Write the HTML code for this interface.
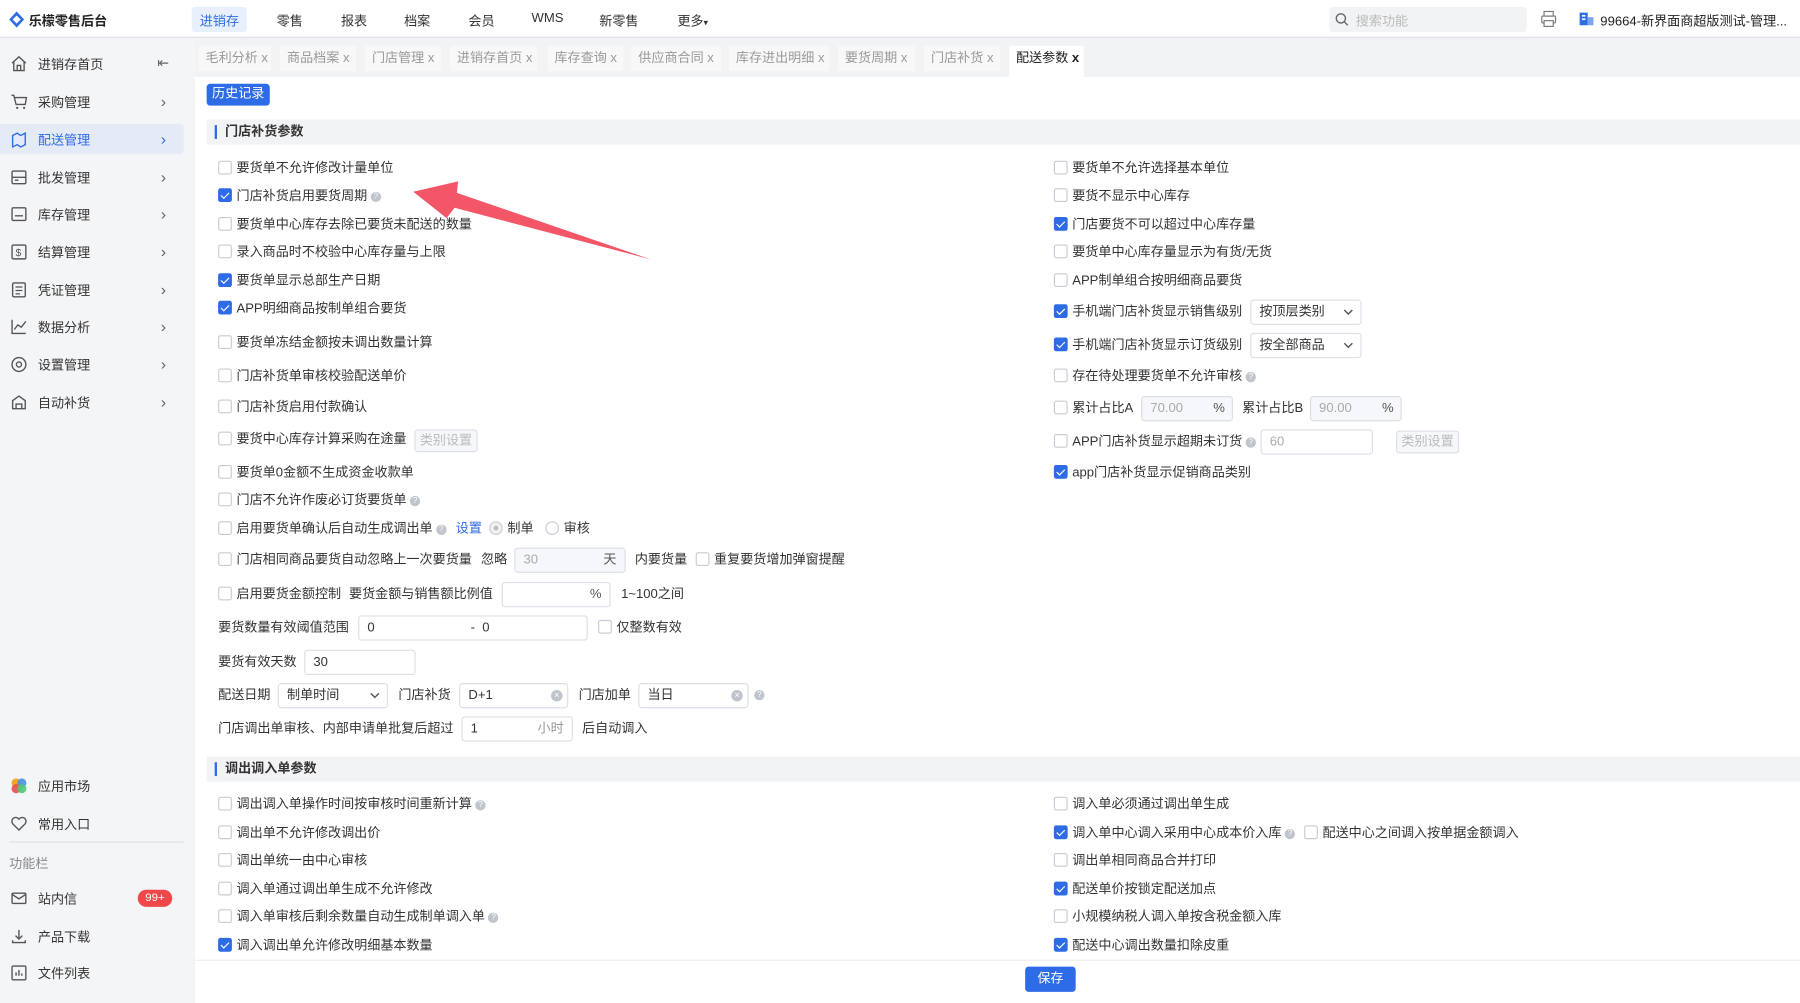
<!DOCTYPE html>
<html><head><meta charset="utf-8">
<style>
*{margin:0;padding:0;box-sizing:border-box}
html,body{width:1800px;height:1003px;overflow:hidden;background:#fff}
#w{position:absolute;left:0;top:0;width:1568px;height:874px;transform:scale(1.148);transform-origin:0 0;font-family:"Liberation Sans","Noto Sans CJK SC",sans-serif;font-size:11.4px;color:#333}
.a{position:absolute;white-space:nowrap}
.top{left:0;top:0;width:1568px;height:33px;background:#fff;border-bottom:1px solid #dcdfe6}
.side{left:0;top:33px;width:170px;height:841px;background:#f4f5f7}
.tabs{left:170px;top:33px;width:1398px;height:34px;background:#f2f3f5}
.tab{position:absolute;top:7px;height:22px;line-height:22px;background:#f8f8f9;color:#999;padding-left:6px;font-size:11.4px}
.tab.on{background:#fff;color:#222}
.sec{left:180px;width:1388px;height:22px;background:#f2f3f5;font-weight:bold;font-size:11.4px;line-height:22px;padding-left:16px}
.sec:before{content:"";position:absolute;left:7px;top:5px;width:2px;height:12px;background:#2e6be6}
.r{position:absolute;white-space:nowrap;height:14px;line-height:14px;font-size:11.4px;color:#333}
.cb{display:inline-block;width:12px;height:12px;border:1px solid #c8ccd4;border-radius:2px;vertical-align:-2px;margin-right:4px;background:#fff;position:relative}
.cb.c{background:#2e6be6;border-color:#2e6be6}
.cb.c:after{content:"";position:absolute;left:3px;top:1px;width:3px;height:6px;border:solid #fff;border-width:0 1.5px 1.5px 0;transform:rotate(45deg)}
.q{display:inline-block;width:9px;height:9px;border-radius:50%;background:#c0c4cc;color:#fff;font-size:7px;line-height:9px;text-align:center;margin-left:3px;vertical-align:1px}
.in{position:absolute;height:22px;border:1px solid #dcdfe6;border-radius:3px;background:#fff;line-height:20px;padding-left:7px;font-size:11.4px;color:#333}
.in.d{background:#f5f7fa;color:#aaa}
.btn{position:absolute;height:20px;border:1px solid #dcdfe6;border-radius:3px;background:#f5f7fa;color:#bbb;line-height:18px;text-align:center;font-size:11.4px}
.si{position:absolute;left:9px;width:15px;height:15px}
.st{position:absolute;left:33px;font-size:11.4px;color:#333}
.ar{position:absolute;left:140px;color:#666;font-size:14px;line-height:14px}
</style></head><body><div id="w">
<div class="a top">
  <svg class="a" style="left:8px;top:10px" width="13" height="14" viewBox="0 0 13 14"><path d="M6.5 0L13 7 6.5 14 0 7z" fill="#2e6be6"/><path d="M6.5 3.5L10 7 6.5 10.5 3 7z" fill="#fff"/></svg>
  <div class="a" style="left:25px;top:10px;font-weight:bold;color:#222">乐檬零售后台</div>
  <div class="a" style="left:167px;top:6px;width:48px;height:22px;background:#e8effd;border-radius:3px"></div>
  <div class="a" style="left:174px;top:10px;color:#2e6be6">进销存</div>
  <div class="a" style="left:241px;top:10px">零售</div>
  <div class="a" style="left:297px;top:10px">报表</div>
  <div class="a" style="left:352px;top:10px">档案</div>
  <div class="a" style="left:408px;top:10px">会员</div>
  <div class="a" style="left:463px;top:10px">WMS</div>
  <div class="a" style="left:522px;top:10px">新零售</div>
  <div class="a" style="left:590px;top:10px">更多<span style="font-size:8px">▾</span></div>
  <div class="a" style="left:1158px;top:6px;width:172px;height:22px;background:#f2f3f5;border-radius:3px"></div>
  <svg class="a" style="left:1163px;top:11px" width="12" height="12" viewBox="0 0 12 12"><circle cx="5" cy="5" r="4" fill="none" stroke="#666" stroke-width="1.2"/><path d="M8 8l3 3" stroke="#666" stroke-width="1.2"/></svg>
  <div class="a" style="left:1181px;top:10px;color:#bbb">搜索功能</div>
  <svg class="a" style="left:1342px;top:9px" width="14" height="15" viewBox="0 0 14 15"><rect x="3" y="1" width="8" height="4" fill="none" stroke="#777"/><rect x="1" y="5" width="12" height="6" rx="1" fill="none" stroke="#777"/><rect x="3" y="9" width="8" height="5" fill="#fff" stroke="#777"/></svg>
  <svg class="a" style="left:1375px;top:10px" width="14" height="13" viewBox="0 0 14 13"><rect x="1" y="1" width="7" height="11" fill="#2e6be6"/><rect x="8" y="5" width="5" height="7" fill="#7aa3f0"/><rect x="3" y="3" width="3" height="1.5" fill="#fff"/><rect x="3" y="6" width="3" height="1.5" fill="#fff"/></svg>
  <div class="a" style="left:1394px;top:10px;color:#222">99664-新界面商超版测试-管理...</div>
</div>

<div class="a side">
  <div class="a" style="left:0;top:75px;width:160px;height:26px;background:#e4eaf6;border-radius:0 3px 3px 0"></div>
</div>
<div class="a" style="left:0;top:0">
<svg class="si" style="top:48px" viewBox="0 0 15 15"><path d="M1.5 7L7.5 1.5 13.5 7M3 6v7.5h9V6M6 13.5V9h3v4.5" fill="none" stroke="#555" stroke-width="1.2"/></svg><div class="st" style="top:48px">进销存首页</div><div class="ar" style="top:48px;left:137px;font-size:12px">⇤</div>
<svg class="si" style="top:81px" viewBox="0 0 15 15"><path d="M1 2h2l2 8h8l1-6H4" fill="none" stroke="#555" stroke-width="1.2"/><circle cx="6" cy="13" r="1" fill="#555"/><circle cx="12" cy="13" r="1" fill="#555"/></svg><div class="st" style="top:81px">采购管理</div><div class="ar" style="top:81px">›</div>
<svg class="si" style="top:114px" viewBox="0 0 15 15"><path d="M2 4l4-2 3 2 4-2v10l-4 2-3-2-4 2z" fill="none" stroke="#2e6be6" stroke-width="1.2"/></svg><div class="st" style="top:114px;color:#2e6be6">配送管理</div><div class="ar" style="top:114px;color:#2e6be6">›</div>
<svg class="si" style="top:147px" viewBox="0 0 15 15"><rect x="1.5" y="2" width="12" height="11" rx="1" fill="none" stroke="#555" stroke-width="1.2"/><path d="M1.5 7.5h12M4 10h3" stroke="#555" stroke-width="1.2"/></svg><div class="st" style="top:147px">批发管理</div><div class="ar" style="top:147px">›</div>
<svg class="si" style="top:179px" viewBox="0 0 15 15"><rect x="1.5" y="2" width="12" height="11" rx="1" fill="none" stroke="#555" stroke-width="1.2"/><path d="M4 9h7" stroke="#555" stroke-width="1.2"/></svg><div class="st" style="top:179px">库存管理</div><div class="ar" style="top:179px">›</div>
<svg class="si" style="top:212px" viewBox="0 0 15 15"><rect x="1.5" y="1.5" width="12" height="12" rx="1" fill="none" stroke="#555" stroke-width="1.2"/><text x="4.5" y="11" font-size="9" fill="#555" font-family="Liberation Sans">$</text></svg><div class="st" style="top:212px">结算管理</div><div class="ar" style="top:212px">›</div>
<svg class="si" style="top:245px" viewBox="0 0 15 15"><rect x="2" y="1.5" width="11" height="12" rx="1" fill="none" stroke="#555" stroke-width="1.2"/><path d="M4.5 5h6M4.5 8h6M4.5 11h4" stroke="#555" stroke-width="1.1"/></svg><div class="st" style="top:245px">凭证管理</div><div class="ar" style="top:245px">›</div>
<svg class="si" style="top:277px" viewBox="0 0 15 15"><path d="M1.5 1.5v12h12M3.5 10l3-4 3 2 4-5" fill="none" stroke="#555" stroke-width="1.2"/></svg><div class="st" style="top:277px">数据分析</div><div class="ar" style="top:277px">›</div>
<svg class="si" style="top:310px" viewBox="0 0 15 15"><circle cx="7.5" cy="7.5" r="6" fill="none" stroke="#555" stroke-width="1.2"/><circle cx="7.5" cy="7.5" r="2.2" fill="none" stroke="#555" stroke-width="1.2"/></svg><div class="st" style="top:310px">设置管理</div><div class="ar" style="top:310px">›</div>
<svg class="si" style="top:343px" viewBox="0 0 15 15"><path d="M2 13V6l5.5-4L13 6v7zM5 13V9h5v4" fill="none" stroke="#555" stroke-width="1.2"/></svg><div class="st" style="top:343px">自动补货</div><div class="ar" style="top:343px">›</div>
<svg class="si" style="top:677px" viewBox="0 0 15 15"><circle cx="5" cy="5" r="4" fill="#f5a623"/><circle cx="10" cy="5" r="4" fill="#4a90e2" opacity=".9"/><circle cx="5" cy="10" r="4" fill="#e94e4e" opacity=".9"/><circle cx="10" cy="10" r="4" fill="#50c878" opacity=".9"/></svg><div class="st" style="top:677px">应用市场</div>
<svg class="si" style="top:710px" viewBox="0 0 15 15"><path d="M7.5 13L2 7.5A3 3 0 017.5 3.5 3 3 0 0113 7.5z" fill="none" stroke="#555" stroke-width="1.2"/></svg><div class="st" style="top:710px">常用入口</div>
<div class="a" style="left:8px;top:733px;width:152px;height:1px;background:#dcdfe6"></div>
<div class="a" style="left:8px;top:744px;color:#888">功能栏</div>
<svg class="si" style="top:775px" viewBox="0 0 15 15"><rect x="1.5" y="3" width="12" height="9" rx="1" fill="none" stroke="#555" stroke-width="1.2"/><path d="M1.5 4l6 4 6-4" fill="none" stroke="#555" stroke-width="1.2"/></svg><div class="st" style="top:775px">站内信</div>
<div class="a" style="left:120px;top:775px;width:30px;height:15px;border-radius:8px;background:#f04848;color:#fff;font-size:10px;line-height:15px;text-align:center">99+</div>
<svg class="si" style="top:808px" viewBox="0 0 15 15"><path d="M7.5 2v8M4.5 7l3 3 3-3M2 11v2h11v-2" fill="none" stroke="#555" stroke-width="1.2"/></svg><div class="st" style="top:808px">产品下载</div>
<svg class="si" style="top:840px" viewBox="0 0 15 15"><rect x="1.5" y="1.5" width="12" height="12" rx="1" fill="none" stroke="#555" stroke-width="1.2"/><path d="M5 10V7M7.5 10V5M10 10V8" stroke="#555" stroke-width="1.2"/></svg><div class="st" style="top:840px">文件列表</div>
</div>

<div class="a tabs">
<div class="tab" style="left:3px;width:63px">毛利分析 x</div>
<div class="tab" style="left:74px;width:66px">商品档案 x</div>
<div class="tab" style="left:148px;width:66px">门店管理 x</div>
<div class="tab" style="left:222px;width:76px">进销存首页 x</div>
<div class="tab" style="left:307px;width:66px">库存查询 x</div>
<div class="tab" style="left:380px;width:78px">供应商合同 x</div>
<div class="tab" style="left:465px;width:87px">库存进出明细 x</div>
<div class="tab" style="left:560px;width:67px">要货周期 x</div>
<div class="tab" style="left:635px;width:66px">门店补货 x</div>
<div class="tab on" style="left:709px;width:65px;height:27px">配送参数 <b>x</b></div>
</div>

<div class="a" style="left:180px;top:73px;width:55px;height:19px;background:#2e6be6;border-radius:3px;color:#fff;line-height:19px;text-align:center">历史记录</div>
<div class="a sec" style="top:104px">门店补货参数</div>

<div class="r" style="left:190px;top:140px"><i class="cb"></i>要货单不允许修改计量单位</div>
<div class="r" style="left:190px;top:164px"><i class="cb c"></i>门店补货启用要货周期<span class="q">?</span></div>
<div class="r" style="left:190px;top:189px"><i class="cb"></i>要货单中心库存去除已要货未配送的数量</div>
<div class="r" style="left:190px;top:213px"><i class="cb"></i>录入商品时不校验中心库存量与上限</div>
<div class="r" style="left:190px;top:238px"><i class="cb c"></i>要货单显示总部生产日期</div>
<div class="r" style="left:190px;top:262px"><i class="cb c"></i>APP明细商品按制单组合要货</div>
<div class="r" style="left:190px;top:292px"><i class="cb"></i>要货单冻结金额按未调出数量计算</div>
<div class="r" style="left:190px;top:321px"><i class="cb"></i>门店补货单审核校验配送单价</div>
<div class="r" style="left:190px;top:348px"><i class="cb"></i>门店补货启用付款确认</div>
<div class="r" style="left:190px;top:376px"><i class="cb"></i>要货中心库存计算采购在途量</div>
<div class="btn" style="left:361px;top:374px;width:55px">类别设置</div>
<div class="r" style="left:190px;top:405px"><i class="cb"></i>要货单0金额不生成资金收款单</div>
<div class="r" style="left:190px;top:429px"><i class="cb"></i>门店不允许作废必订货要货单<span class="q">?</span></div>
<div class="r" style="left:190px;top:454px"><i class="cb"></i>启用要货单确认后自动生成调出单<span class="q">?</span></div>
<div class="r" style="left:397px;top:454px;color:#2e6be6">设置</div>
<div class="r" style="left:426px;top:454px"><i class="cb" style="border-radius:50%;background:#f0f0f0"><i style="position:absolute;left:3px;top:3px;width:4px;height:4px;border-radius:50%;background:#bbb"></i></i>制单</div>
<div class="r" style="left:475px;top:454px"><i class="cb" style="border-radius:50%"></i>审核</div>
<div class="r" style="left:190px;top:481px"><i class="cb"></i>门店相同商品要货自动忽略上一次要货量</div>
<div class="r" style="left:419px;top:481px">忽略</div>
<div class="in d" style="left:448px;top:477px;width:97px">30<span style="position:absolute;right:7px;color:#555">天</span></div>
<div class="r" style="left:553px;top:481px">内要货量</div>
<div class="r" style="left:606px;top:481px"><i class="cb"></i>重复要货增加弹窗提醒</div>
<div class="r" style="left:190px;top:511px"><i class="cb"></i>启用要货金额控制</div>
<div class="r" style="left:304px;top:511px">要货金额与销售额比例值</div>
<div class="in" style="left:437px;top:507px;width:95px"><span style="position:absolute;right:7px;color:#555">%</span></div>
<div class="r" style="left:541px;top:511px">1~100之间</div>
<div class="r" style="left:190px;top:540px">要货数量有效阈值范围</div>
<div class="in" style="left:312px;top:536px;width:200px">0<span style="position:absolute;left:97px">- &nbsp;0</span></div>
<div class="r" style="left:521px;top:540px"><i class="cb"></i>仅整数有效</div>
<div class="r" style="left:190px;top:570px">要货有效天数</div>
<div class="in" style="left:265px;top:566px;width:97px">30</div>
<div class="r" style="left:190px;top:599px">配送日期</div>
<div class="in" style="left:242px;top:595px;width:96px">制单时间<svg style="position:absolute;right:6px;top:7px" width="9" height="6" viewBox="0 0 9 6"><path d="M1 1l3.5 3.5L8 1" fill="none" stroke="#555" stroke-width="1.2"/></svg></div>
<div class="r" style="left:347px;top:599px">门店补货</div>
<div class="in" style="left:400px;top:595px;width:95px">D+1<span style="position:absolute;right:4px;top:5px;width:10px;height:10px;border-radius:50%;background:#c0c4cc;color:#fff;font-size:8px;line-height:10px;text-align:center">×</span></div>
<div class="r" style="left:504px;top:599px">门店加单</div>
<div class="in" style="left:556px;top:595px;width:96px">当日<span style="position:absolute;right:4px;top:5px;width:10px;height:10px;border-radius:50%;background:#c0c4cc;color:#fff;font-size:8px;line-height:10px;text-align:center">×</span></div>
<span class="q a" style="left:654px;top:601px">?</span>
<div class="r" style="left:190px;top:628px">门店调出单审核、内部申请单批复后超过</div>
<div class="in" style="left:402px;top:624px;width:97px">1<span style="position:absolute;right:7px;color:#999">小时</span></div>
<div class="r" style="left:507px;top:628px">后自动调入</div>

<div class="r" style="left:918px;top:140px"><i class="cb"></i>要货单不允许选择基本单位</div>
<div class="r" style="left:918px;top:164px"><i class="cb"></i>要货不显示中心库存</div>
<div class="r" style="left:918px;top:189px"><i class="cb c"></i>门店要货不可以超过中心库存量</div>
<div class="r" style="left:918px;top:213px"><i class="cb"></i>要货单中心库存量显示为有货/无货</div>
<div class="r" style="left:918px;top:238px"><i class="cb"></i>APP制单组合按明细商品要货</div>
<div class="r" style="left:918px;top:265px"><i class="cb c"></i>手机端门店补货显示销售级别</div>
<div class="in" style="left:1089px;top:261px;width:97px">按顶层类别<svg style="position:absolute;right:6px;top:7px" width="9" height="6" viewBox="0 0 9 6"><path d="M1 1l3.5 3.5L8 1" fill="none" stroke="#555" stroke-width="1.2"/></svg></div>
<div class="r" style="left:918px;top:294px"><i class="cb c"></i>手机端门店补货显示订货级别</div>
<div class="in" style="left:1089px;top:290px;width:97px">按全部商品<svg style="position:absolute;right:6px;top:7px" width="9" height="6" viewBox="0 0 9 6"><path d="M1 1l3.5 3.5L8 1" fill="none" stroke="#555" stroke-width="1.2"/></svg></div>
<div class="r" style="left:918px;top:321px"><i class="cb"></i>存在待处理要货单不允许审核<span class="q">?</span></div>
<div class="r" style="left:918px;top:349px"><i class="cb"></i>累计占比A</div>
<div class="in d" style="left:994px;top:345px;width:80px">70.00<span style="position:absolute;right:6px;color:#555">%</span></div>
<div class="r" style="left:1082px;top:349px">累计占比B</div>
<div class="in d" style="left:1141px;top:345px;width:80px">90.00<span style="position:absolute;right:6px;color:#555">%</span></div>
<div class="r" style="left:918px;top:378px"><i class="cb"></i>APP门店补货显示超期未订货<span class="q">?</span></div>
<div class="in" style="left:1098px;top:374px;width:98px;color:#aaa">60</div>
<div class="btn" style="left:1216px;top:375px;width:55px">类别设置</div>
<div class="r" style="left:918px;top:405px"><i class="cb c"></i>app门店补货显示促销商品类别</div>

<div class="a sec" style="top:659px">调出调入单参数</div>
<div class="r" style="left:190px;top:694px"><i class="cb"></i>调出调入单操作时间按审核时间重新计算<span class="q">?</span></div>
<div class="r" style="left:190px;top:719px"><i class="cb"></i>调出单不允许修改调出价</div>
<div class="r" style="left:190px;top:743px"><i class="cb"></i>调出单统一由中心审核</div>
<div class="r" style="left:190px;top:768px"><i class="cb"></i>调入单通过调出单生成不允许修改</div>
<div class="r" style="left:190px;top:792px"><i class="cb"></i>调入单审核后剩余数量自动生成制单调入单<span class="q">?</span></div>
<div class="r" style="left:190px;top:817px"><i class="cb c"></i>调入调出单允许修改明细基本数量</div>
<div class="r" style="left:918px;top:694px"><i class="cb"></i>调入单必须通过调出单生成</div>
<div class="r" style="left:918px;top:719px"><i class="cb c"></i>调入单中心调入采用中心成本价入库<span class="q">?</span></div>
<div class="r" style="left:1136px;top:719px"><i class="cb"></i>配送中心之间调入按单据金额调入</div>
<div class="r" style="left:918px;top:743px"><i class="cb"></i>调出单相同商品合并打印</div>
<div class="r" style="left:918px;top:768px"><i class="cb c"></i>配送单价按锁定配送加点</div>
<div class="r" style="left:918px;top:792px"><i class="cb"></i>小规模纳税人调入单按含税金额入库</div>
<div class="r" style="left:918px;top:817px"><i class="cb c"></i>配送中心调出数量扣除皮重</div>

<div class="a" style="left:170px;top:836px;width:1398px;height:38px;background:#fff;border-top:1px solid #eee"></div>
<div class="a" style="left:893px;top:842px;width:44px;height:22px;background:#2e6be6;border-radius:3px;color:#fff;line-height:22px;text-align:center">保存</div>

<svg class="a" style="left:0;top:0" width="1568" height="874"><polygon points="360,167 399,158 398,168 567,226 396,181 389,190" fill="#f2495a" opacity="0.92"/></svg>
</div></body></html>
